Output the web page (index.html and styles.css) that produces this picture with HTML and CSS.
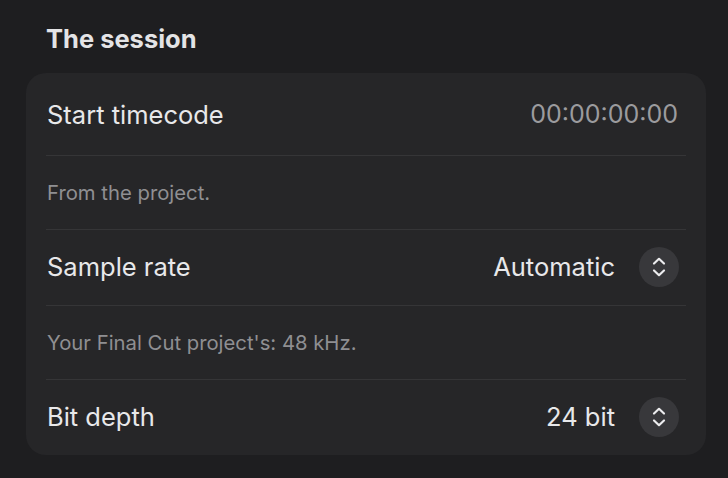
FILE: index.html
```html
<!DOCTYPE html>
<html>
<head>
<meta charset="utf-8">
<link rel="stylesheet" href="styles.css">
</head>
<body>
<div class="page">
  <h2 class="title">The session</h2>
  <div class="card">
    <div class="row control first">
      <span class="label">Start timecode</span>
      <span class="timecode">00:00:00:00</span>
    </div>
    <div class="row caption">From the project.</div>
    <div class="row control">
      <span class="label">Sample rate</span>
      <div class="picker">
        <span class="value">Automatic</span>
        <span class="stepper"><svg width="40" height="40" viewBox="0 0 40 40"><path d="M15 16.5 L20 11.8 L25 16.5 M15 23.5 L20 28.2 L25 23.5" fill="none" stroke="#ececee" stroke-width="2.2" stroke-linecap="round" stroke-linejoin="round"/></svg></span>
      </div>
    </div>
    <div class="row caption">Your Final Cut project's: 48 kHz.</div>
    <div class="row control">
      <span class="label">Bit depth</span>
      <div class="picker">
        <span class="value">24 bit</span>
        <span class="stepper"><svg width="40" height="40" viewBox="0 0 40 40"><path d="M15 16.5 L20 11.8 L25 16.5 M15 23.5 L20 28.2 L25 23.5" fill="none" stroke="#ececee" stroke-width="2.2" stroke-linecap="round" stroke-linejoin="round"/></svg></span>
      </div>
    </div>
  </div>
</div>
</body>
</html>
```
FILE: styles.css
```css
html, body {
  margin: 0;
  padding: 0;
  background: #1e1e20;
  font-family: Inter, "Noto Sans", "Liberation Sans", sans-serif;
  color: #e6e6e8;
}
.page {
  width: 728px;
  height: 478px;
  padding: 23px 0 0 26px;
  box-sizing: border-box;
}
.title {
  margin: 0 0 0 20px;
  font-size: 25.5px;
  font-weight: 700;
  line-height: 32px;
  color: #e4e4e6;
}
.card {
  margin-top: 18px;
  width: 680px;
  height: 382px;
  box-sizing: border-box;
  background: #262628;
  border-radius: 20px;
  padding: 0 20px;
}
.row {
  display: flex;
  align-items: center;
  border-top: 1px solid #353537;
  box-sizing: border-box;
}
.row.control {
  justify-content: space-between;
  height: 76px;
  padding-right: 7px;
  padding-bottom: 2px;
}
.row.control.first {
  border-top: none;
  height: 82px;
  padding-bottom: 0;
}
.row.caption {
  height: 74px;
  font-size: 20.3px;
  color: #8f8f92;
  padding-left: 1px;
}
.label {
  font-size: 25.5px;
  color: #e8e8ea;
  padding-left: 1px;
}
.timecode {
  font-size: 25px;
  color: #9b9b9e;
  padding-right: 1px;
}
.picker {
  display: flex;
  align-items: center;
  gap: 24px;
}
.value {
  font-size: 25.5px;
  color: #e8e8ea;
}
.stepper {
  width: 40px;
  height: 40px;
  border-radius: 50%;
  background: #38383b;
  display: flex;
}
```
